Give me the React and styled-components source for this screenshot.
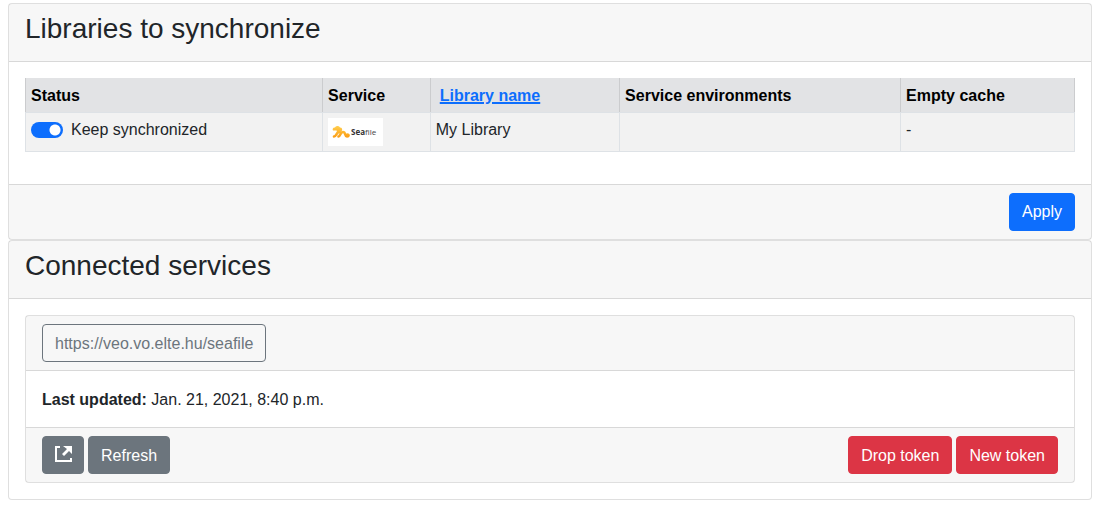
import React, { useState } from "react";
import styled, { createGlobalStyle, css } from "styled-components";

const GlobalStyle = createGlobalStyle`
  *, *::before, *::after { box-sizing: border-box; }
  body {
    margin: 0;
    background: #fff;
    color: #212529;
    font: 16px/24px "Liberation Sans", Arial, sans-serif;
  }
`;

const Page = styled.main`
  padding: 3px 8px 5px;
`;

const Card = styled.section`
  border: 1px solid rgba(0, 0, 0, 0.125);
  border-radius: 4px;
  background: #fff;
`;

const CardHeader = styled.header`
  padding: 8px 16px;
  background: rgba(0, 0, 0, 0.03);
  border-bottom: 1px solid rgba(0, 0, 0, 0.125);
`;

const CardTitle = styled.h3`
  margin: 0 0 8px;
  font-size: 28px;
  line-height: 33px;
  font-weight: 500;
`;

const CardBody = styled.div`
  padding: 16px;
`;

const ServiceInfo = styled(CardBody)`
  padding: 17px 16px 15px;
`;

const CardFooter = styled.footer`
  display: flex;
  justify-content: ${({ $align }) => $align || "space-between"};
  padding: 8px 16px;
  background: rgba(0, 0, 0, 0.03);
  border-top: 1px solid rgba(0, 0, 0, 0.125);
`;

const ButtonGroup = styled.div`
  display: flex;
  gap: 4px;
`;

const palette = {
  primary: "#0d6efd",
  secondary: "#6c757d",
  danger: "#dc3545",
};

const Button = styled.button`
  display: block;
  padding: 6px 12px;
  border: 1px solid ${({ $tone }) => palette[$tone]};
  border-radius: 4px;
  font: inherit;
  cursor: pointer;
  ${({ $tone, $outline }) =>
    $outline
      ? css`
          color: ${palette[$tone]};
          background: transparent;
        `
      : css`
          color: #fff;
          background: ${palette[$tone]};
        `}
`;

const ServiceButton = styled(Button)`
  padding: 7px 12px 5px;
`;

const Table = styled.table`
  width: 100%;
  margin-bottom: 16px;
  border-collapse: separate;
  border-spacing: 0;
`;

const HeadCell = styled.th`
  padding: 6px 5px 4px;
  border-right: 1px solid #cbccce;
  background: #e2e3e5;
  color: #000;
  text-align: left;
  &:first-child { border-left: 1px solid #cbccce; }
`;

const Cell = styled.td`
  padding: 5px;
  border: 1px solid #dee2e6;
  border-left-width: 0;
  background: #f2f2f2;
  vertical-align: top;
  &:first-child { border-left-width: 1px; }
`;

const SortLink = styled.a`
  padding: 0 4px;
  color: #0d6efd;
  text-decoration-thickness: 2px;
`;

const SwitchLabel = styled.label`
  display: flex;
  align-items: center;
  gap: 8px;
`;

const Switch = styled.input.attrs({ type: "checkbox", role: "switch" })`
  appearance: none;
  flex: none;
  width: 32px;
  height: 16px;
  margin: 0;
  border-radius: 8px;
  background: #adb5bd radial-gradient(circle at 8px 8px, #fff 5px, transparent 6px);
  &:checked {
    background: #0d6efd radial-gradient(circle at 24px 8px, #fff 5px, transparent 6px);
  }
`;

const Logo = styled.svg`
  display: block;
  width: 55px;
  height: 28px;
  background: #fff;
`;

const LogoText = styled.text`
  font: 700 8px "Open Sans", sans-serif;
  fill: #333;
`;

const LogoTextLight = styled.tspan`
  font-weight: 400;
  fill: #444;
`;

const Icon = styled.svg`
  display: block;
  width: 16px;
  height: 24px;
  overflow: visible;
`;

function SeafileLogo() {
  return (
    <Logo viewBox="0 0 55 28" role="img" aria-label="Seafile">
      <defs>
        <linearGradient
          id="seafile-gold"
          gradientUnits="userSpaceOnUse"
          x1="0"
          y1="8"
          x2="0"
          y2="20"
        >
          <stop offset="0" stopColor="#ffcf50" />
          <stop offset="1" stopColor="#fb9a10" />
        </linearGradient>
      </defs>
      <path
        fill="url(#seafile-gold)"
        d="M5 12.500c-1-2 .5-3.500 2-3 1-2 4-2 5 0 2 0 2.500 1.500 2 3l-1 1.300-3-.3-1.500-1z"
      />
      <path
        fill="none"
        stroke="url(#seafile-gold)"
        strokeWidth="2.600"
        strokeLinecap="round"
        strokeLinejoin="round"
        d="M6 18.500C8 18.500 8.500 15 10.500 14M10.500 18.500c2 0 1.500-4.500 4.500-4.500 3 0 1.500 4.500 4 4.500 2 0 2-2 .5-2M10 13l2.500 1.500"
      />
      <LogoText x="23" y="17">
        Sea<LogoTextLight>file</LogoTextLight>
      </LogoText>
    </Logo>
  );
}

function ExternalLinkIcon() {
  return (
    <Icon viewBox="0 0 16 24" aria-hidden="true">
      <path fill="none" stroke="#fff" strokeWidth="2" d="M5 3H1v14h15v-3" />
      <path fill="#fff" d="M8 2h9v8l-3-3-5 5-2-2 5-5z" />
    </Icon>
  );
}

export default function App() {
  const [synced, setSynced] = useState(true);
  return (
    <>
      <GlobalStyle />
      <Page>
        <Card>
          <CardHeader>
            <CardTitle>Libraries to synchronize</CardTitle>
          </CardHeader>
          <CardBody>
            <Table>
              <thead>
                <tr>
                  <HeadCell>Status</HeadCell>
                  <HeadCell>Service</HeadCell>
                  <HeadCell>
                    <SortLink href="#name">Library name</SortLink>
                  </HeadCell>
                  <HeadCell>Service environments</HeadCell>
                  <HeadCell>Empty cache</HeadCell>
                </tr>
              </thead>
              <tbody>
                <tr>
                  <Cell>
                    <SwitchLabel>
                      <Switch
                        checked={synced}
                        onChange={(e) => setSynced(e.target.checked)}
                      />
                      Keep synchronized
                    </SwitchLabel>
                  </Cell>
                  <Cell>
                    <SeafileLogo />
                  </Cell>
                  <Cell>My Library</Cell>
                  <Cell />
                  <Cell>-</Cell>
                </tr>
              </tbody>
            </Table>
          </CardBody>
          <CardFooter $align="flex-end">
            <Button type="submit" $tone="primary">Apply</Button>
          </CardFooter>
        </Card>
        <Card>
          <CardHeader>
            <CardTitle>Connected services</CardTitle>
          </CardHeader>
          <CardBody>
            <Card>
              <CardHeader>
                <ServiceButton type="button" $tone="secondary" $outline>
                  https://veo.vo.elte.hu/seafile
                </ServiceButton>
              </CardHeader>
              <ServiceInfo>
                <strong>Last updated:</strong> Jan. 21, 2021, 8:40 p.m.
              </ServiceInfo>
              <CardFooter>
                <ButtonGroup>
                  <ServiceButton type="button" $tone="secondary" aria-label="Open service">
                    <ExternalLinkIcon />
                  </ServiceButton>
                  <ServiceButton type="button" $tone="secondary">Refresh</ServiceButton>
                </ButtonGroup>
                <ButtonGroup>
                  <ServiceButton type="button" $tone="danger">Drop token</ServiceButton>
                  <ServiceButton type="button" $tone="danger">New token</ServiceButton>
                </ButtonGroup>
              </CardFooter>
            </Card>
          </CardBody>
        </Card>
      </Page>
    </>
  );
}
